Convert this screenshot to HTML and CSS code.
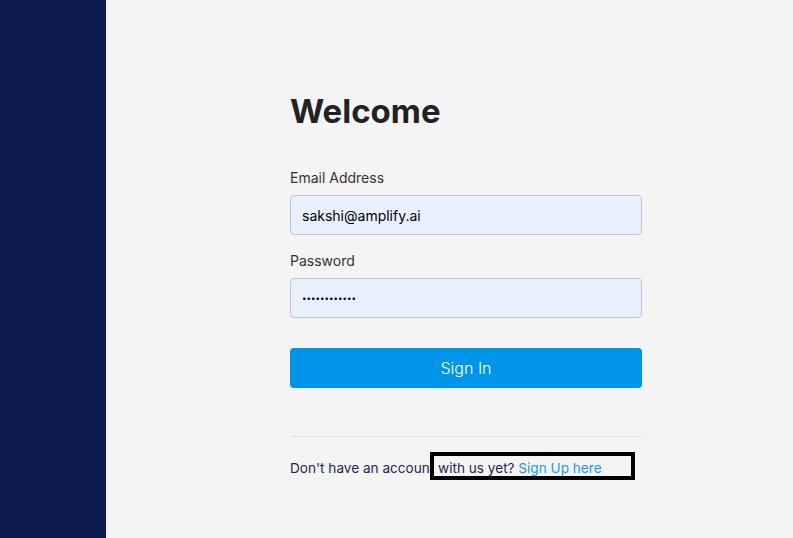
FILE: index.html
```html
<!DOCTYPE html>
<html lang="en">
<head>
    <meta charset="UTF-8">
    <meta name="viewport" content="width=device-width, initial-scale=1.0">
    <title>Welcome</title>
    <link rel="stylesheet" href="styles.css">
</head>
<body>
    <div class="layout">
        <aside class="sidebar"></aside>
        <main class="main">
            <form action="#" method="get" class="login-form">
                <h1 class="title">Welcome</h1>
                <label class="field-label" for="email">Email Address</label>
                <input class="field-input" type="email" id="email" value="sakshi@amplify.ai">
                <label class="field-label" for="password">Password</label>
                <input class="field-input field-password" type="password" id="password" value="passwordtext">
                <button type="button" class="btn-signin">Sign In</button>
                <hr class="divider">
                <p class="signup">
                    Don't have an account with us yet? <a href="#" class="signup-link">Sign Up here</a>
                    <span class="highlight"></span>
                </p>
            </form>
        </main>
    </div>
</body>
</html>
```

FILE: styles.css
```css
* {
    box-sizing: border-box;
}

body {
    margin: 0;
    font-family: Inter, "Noto Sans", sans-serif;
    background: #f4f4f4;
}

.layout {
    display: flex;
    height: 538px;
}

.sidebar {
    width: 106px;
    background: #0f1a4f;
}

.main {
    flex: 1;
    padding: 91px 0 0 184px;
}

.login-form {
    width: 352px;
    display: flex;
    flex-direction: column;
}

.title {
    margin: 0 0 38px 0;
    font-size: 33px;
    font-weight: 700;
    color: #222;
    line-height: 40px;
}

.field-label {
    font-size: 14px;
    color: #333;
    line-height: 17px;
    margin-bottom: 9px;
}

.field-input {
    height: 40px;
    padding: 0 11px;
    font-family: inherit;
    font-size: 14px;
    color: #000;
    background: #e8f0fe;
    border: 1px solid #c2c4c9;
    border-radius: 4px;
    margin-bottom: 17px;
}

.field-password {
    font-size: 8px;
    letter-spacing: 0;
}

.btn-signin {
    margin-top: 13px;
    height: 40px;
    border: none;
    border-radius: 4px;
    background: #0095e8;
    color: #fff;
    font-family: inherit;
    font-size: 16px;
    font-weight: 300;
    cursor: pointer;
}

.divider {
    margin: 48px 0 0 0;
    border: none;
    border-top: 1px solid #e2e2e2;
}

.signup {
    position: relative;
    margin: 23px 0 0 0;
    font-size: 13.6px;
    line-height: 17px;
    color: #1d2750;
}

.signup-link {
    color: #1a9ae6;
    text-decoration: none;
}

.highlight {
    position: absolute;
    left: 140px;
    top: -8px;
    width: 205px;
    height: 28px;
    border: 4px solid #000;
}
```
